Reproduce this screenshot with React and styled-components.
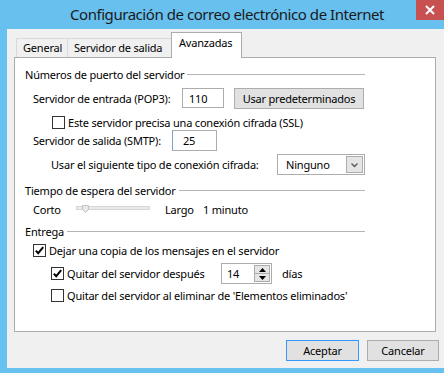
import React from 'react';
import styled, { createGlobalStyle } from 'styled-components';

const GlobalStyle = createGlobalStyle`
    html, body {
        margin: 0;
        padding: 0;
        background: #68c0ef;
    }
    body {
        font-family: "Noto Sans", "Open Sans", sans-serif;
        font-size: 11px;
        letter-spacing: -0.2px;
        color: #000;
    }
`;

const Frame = styled.div`
    width: 444px;
    height: 373px;
    background: #68c0ef;
    display: flex;
    flex-direction: column;
    overflow: hidden;
`;

const TitleBar = styled.div`
    height: 29px;
    display: flex;
    align-items: flex-start;
`;

const Title = styled.div`
    flex: 1;
    padding-left: 70px;
    height: 29px;
    line-height: 28px;
    font-size: 15px;
    letter-spacing: -0.45px;
    color: #1a1a1a;
    white-space: nowrap;
`;

const CloseButton = styled.div`
    width: 28px;
    height: 20px;
    background: #c75050;
    display: flex;
    align-items: center;
    justify-content: center;
`;

const Client = styled.div`
    flex: 1;
    margin: 0 0 5px 7px;
    background: #f0f0f0;
    display: flex;
    flex-direction: column;
    padding: 3px 0 0 7px;
`;

const TabStrip = styled.div`
    height: 25px;
    display: flex;
    align-items: flex-end;
    padding-left: 2px;
`;

const Tab = styled.div`
    position: relative;
    box-sizing: border-box;
    width: ${p => p.width}px;
    height: ${p => (p.active ? 26 : 19)}px;
    margin-bottom: ${p => (p.active ? -1 : 0)}px;
    margin-left: ${p => (p.active ? -2 : 0)}px;
    z-index: ${p => (p.active ? 1 : 0)};
    background: ${p => (p.active ? '#fff' : '#f0f0f0')};
    border: 1px solid ${p => (p.active ? '#acacac' : '#d9d9d9')};
    border-bottom: none;
    border-left-width: ${p => (p.first || p.active ? 1 : 0)}px;
    padding: ${p => (p.active ? '2px 0 0 7px' : '1px 0 0 6px')};
    line-height: 16px;
    white-space: nowrap;
`;

const Panel = styled.div`
    box-sizing: border-box;
    width: 422px;
    height: 275px;
    background: #fff;
    border: 1px solid #acacac;
    padding: 8px 0 0 10px;
    display: flex;
    flex-direction: column;
`;

const Column = styled.div`
    width: 340px;
    display: flex;
    flex-direction: column;
`;

const GroupHeader = styled.div`
    height: 16px;
    margin-top: ${p => p.top || 0}px;
    display: flex;
    align-items: center;
    gap: 3px;
    white-space: nowrap;

    &::after {
        content: '';
        flex: 1;
        height: 1px;
        background: #b4b4b4;
    }
`;

const Row = styled.div`
    display: flex;
    align-items: center;
    height: ${p => p.h || 16}px;
    margin-top: ${p => p.top || 0}px;
    margin-left: ${p => p.indent || 0}px;
    white-space: nowrap;
`;

const Label = styled.span`
    display: inline-block;
    flex: none;
    width: ${p => (p.w ? `${p.w}px` : 'auto')};
    margin-left: ${p => p.gap || 0}px;
`;

const TextBox = styled.div`
    box-sizing: border-box;
    width: ${p => p.w}px;
    height: ${p => p.h || 20}px;
    margin-left: ${p => p.gap || 0}px;
    background: #fff;
    border: 1px solid #acacac;
    border-left-color: ${p => (p.focus ? '#7aa3d4' : '#acacac')};
    padding-left: ${p => p.pad || 6}px;
    display: flex;
    align-items: center;
`;

const Button = styled.div`
    box-sizing: border-box;
    width: ${p => p.w}px;
    height: 21px;
    margin-left: ${p => p.gap || 0}px;
    background: #e1e1e1;
    border: 1px solid ${p => (p.primary ? '#3399ff' : '#adadad')};
    display: flex;
    align-items: center;
    justify-content: center;
`;

const CheckBox = styled.div`
    box-sizing: border-box;
    width: 13px;
    height: 13px;
    flex: none;
    background: #fff;
    border: 1px solid #333;
    margin-right: 3px;
    display: flex;
    align-items: center;
    justify-content: center;
`;

const Select = styled.div`
    box-sizing: border-box;
    width: 88px;
    height: 21px;
    margin-left: ${p => p.gap || 0}px;
    background: #fff;
    border: 1px solid #acacac;
    display: flex;
    align-items: center;
    padding: 1px;
`;

const SelectText = styled.span`
    flex: 1;
    padding-left: 7px;
`;

const DropButton = styled.div`
    box-sizing: border-box;
    width: 17px;
    height: 17px;
    background: #e5e5e5;
    border: 1px solid #acacac;
    display: flex;
    align-items: center;
    justify-content: center;
`;

const SpinBox = styled.div`
    box-sizing: border-box;
    width: 51px;
    height: 21px;
    margin-left: ${p => p.gap || 0}px;
    background: #fff;
    border: 1px solid #acacac;
    display: flex;
    align-items: center;
    padding: 1px;
`;

const SpinText = styled.span`
    flex: 1;
    padding-left: 4px;
`;

const SpinButtons = styled.div`
    width: 16px;
    height: 17px;
    display: flex;
    flex-direction: column;
`;

const SpinHalf = styled.div`
    flex: 1;
    box-sizing: border-box;
    background: #e5e5e5;
    border: 1px solid #acacac;
    border-top-width: ${p => (p.down ? 0 : 1)}px;
    display: flex;
    align-items: center;
    justify-content: center;
`;

const Footer = styled.div`
    display: flex;
    justify-content: flex-end;
    padding-right: 5px;
    margin-top: 8px;
    gap: 8px;
`;

const Check = ({ checked }) => (
    <CheckBox>
        {checked && (
            <svg width="11" height="11" viewBox="0 0 11 11">
                <path d="M1.8 5.6 L4.2 8.2 L9.2 2.2" fill="none" stroke="#000" strokeWidth="2" />
            </svg>
        )}
    </CheckBox>
);

const Slider = () => (
    <svg width="74" height="10" viewBox="0 0 74 10">
        <rect x="0.5" y="2.5" width="73" height="3" fill="#e7eaea" stroke="#d6d6d6" />
        <path d="M6.5 1.5 H12.5 V5.5 L9.5 8.5 L6.5 5.5 Z" fill="#e8e8e8" stroke="#c3c3c3" />
    </svg>
);

const App = () => {
    return (
        <>
            <GlobalStyle />
            <Frame>
                <TitleBar>
                    <Title>Configuración de correo electrónico de Internet</Title>
                    <CloseButton>
                        <svg width="10" height="10" viewBox="0 0 10 10">
                            <path d="M1 1 L9 9 M9 1 L1 9" stroke="#fff" strokeWidth="2" />
                        </svg>
                    </CloseButton>
                </TitleBar>
                <Client>
                    <TabStrip>
                        <Tab width={52} first>General</Tab>
                        <Tab width={105}>Servidor de salida</Tab>
                        <Tab width={71} active>Avanzadas</Tab>
                    </TabStrip>
                    <Panel>
                        <Column>
                            <GroupHeader>Números de puerto del servidor</GroupHeader>
                            <Row h={20} top={6} indent={8}>
                                <Label w={149}>Servidor de entrada (POP3):</Label>
                                <TextBox w={42}>110</TextBox>
                                <Button w={130} gap={10}>Usar predeterminados</Button>
                            </Row>
                            <Row h={13} top={8} indent={27}>
                                <Check />
                                <Label>Este servidor precisa una conexión cifrada (SSL)</Label>
                            </Row>
                            <Row h={21} top={1} indent={8}>
                                <Label w={139}>Servidor de salida (SMTP):</Label>
                                <TextBox w={45} h={21} pad={10} focus>25</TextBox>
                            </Row>
                            <Row h={21} top={3} indent={26}>
                                <Label w={226}>Usar el siguiente tipo de conexión cifrada:</Label>
                                <Select>
                                    <SelectText>Ninguno</SelectText>
                                    <DropButton>
                                        <svg width="9" height="6" viewBox="0 0 9 6">
                                            <path d="M1.5 1.5 L4.5 4.5 L7.5 1.5" fill="none" stroke="#555" strokeWidth="1.3" />
                                        </svg>
                                    </DropButton>
                                </Select>
                            </Row>
                            <GroupHeader top={7}>Tiempo de espera del servidor</GroupHeader>
                            <Row top={3} indent={8}>
                                <Label w={43}>Corto</Label>
                                <Slider />
                                <Label gap={15} w={38}>Largo</Label>
                                <Label>1 minuto</Label>
                            </Row>
                            <GroupHeader top={6}>Entrega</GroupHeader>
                            <Row h={13} top={5} indent={8}>
                                <Check checked />
                                <Label>Dejar una copia de los mensajes en el servidor</Label>
                            </Row>
                            <Row h={21} top={6} indent={26}>
                                <Check checked />
                                <Label w={154}>Quitar del servidor después</Label>
                                <SpinBox>
                                    <SpinText>14</SpinText>
                                    <SpinButtons>
                                        <SpinHalf>
                                            <svg width="7" height="4" viewBox="0 0 7 4">
                                                <path d="M0 4 L3.5 0 L7 4 Z" fill="#000" />
                                            </svg>
                                        </SpinHalf>
                                        <SpinHalf down>
                                            <svg width="7" height="4" viewBox="0 0 7 4">
                                                <path d="M0 0 L3.5 4 L7 0 Z" fill="#000" />
                                            </svg>
                                        </SpinHalf>
                                    </SpinButtons>
                                </SpinBox>
                                <Label gap={10}>días</Label>
                            </Row>
                            <Row h={13} top={5} indent={26}>
                                <Check />
                                <Label>Quitar del servidor al eliminar de 'Elementos eliminados'</Label>
                            </Row>
                        </Column>
                    </Panel>
                    <Footer>
                        <Button w={73} primary>Aceptar</Button>
                        <Button w={72}>Cancelar</Button>
                    </Footer>
                </Client>
            </Frame>
        </>
    );
};

export default App;
